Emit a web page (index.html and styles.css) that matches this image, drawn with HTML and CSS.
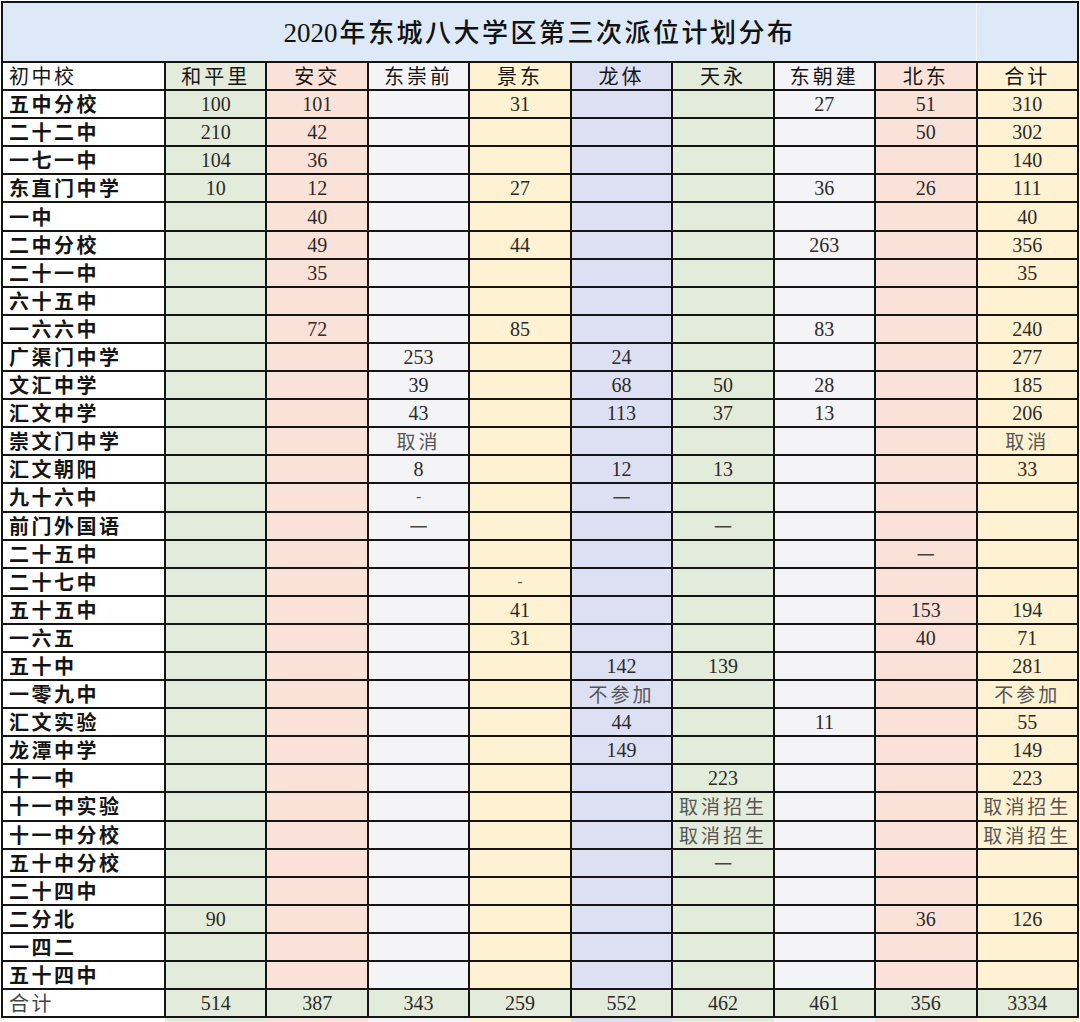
FILE: index.html
```html
<!DOCTYPE html>
<html lang="zh">
<head>
<meta charset="utf-8">
<link rel="stylesheet" href="styles.css">
</head>
<body>
<table class="plan">
  <colgroup>
    <col class="c-name">
    <col class="c-green">
    <col class="c-salmon">
    <col class="c-gray">
    <col class="c-yellow">
    <col class="c-lav">
    <col class="c-green">
    <col class="c-gray">
    <col class="c-salmon">
    <col class="c-yellow">
  </colgroup>
  <tr class="title-row">
    <td colspan="9" class="title"><span class="num">2020</span>年东城八大学区第三次派位计划分布</td>
    <td class="title-end"></td>
  </tr>
  <tr class="head">
    <td class="name">初中校</td><td>和平里</td><td>安交</td><td>东崇前</td><td>景东</td><td>龙体</td><td>天永</td><td>东朝建</td><td>北东</td><td>合计</td>
  </tr>
  <tr><td class="name">五中分校</td><td>100</td><td>101</td><td></td><td>31</td><td></td><td></td><td>27</td><td>51</td><td>310</td></tr>
  <tr><td class="name">二十二中</td><td>210</td><td>42</td><td></td><td></td><td></td><td></td><td></td><td>50</td><td>302</td></tr>
  <tr><td class="name">一七一中</td><td>104</td><td>36</td><td></td><td></td><td></td><td></td><td></td><td></td><td>140</td></tr>
  <tr><td class="name">东直门中学</td><td>10</td><td>12</td><td></td><td>27</td><td></td><td></td><td>36</td><td>26</td><td>111</td></tr>
  <tr><td class="name">一中</td><td></td><td>40</td><td></td><td></td><td></td><td></td><td></td><td></td><td>40</td></tr>
  <tr><td class="name">二中分校</td><td></td><td>49</td><td></td><td>44</td><td></td><td></td><td>263</td><td></td><td>356</td></tr>
  <tr><td class="name">二十一中</td><td></td><td>35</td><td></td><td></td><td></td><td></td><td></td><td></td><td>35</td></tr>
  <tr><td class="name">六十五中</td><td></td><td></td><td></td><td></td><td></td><td></td><td></td><td></td><td></td></tr>
  <tr><td class="name">一六六中</td><td></td><td>72</td><td></td><td>85</td><td></td><td></td><td>83</td><td></td><td>240</td></tr>
  <tr><td class="name">广渠门中学</td><td></td><td></td><td>253</td><td></td><td>24</td><td></td><td></td><td></td><td>277</td></tr>
  <tr><td class="name">文汇中学</td><td></td><td></td><td>39</td><td></td><td>68</td><td>50</td><td>28</td><td></td><td>185</td></tr>
  <tr><td class="name">汇文中学</td><td></td><td></td><td>43</td><td></td><td>113</td><td>37</td><td>13</td><td></td><td>206</td></tr>
  <tr><td class="name">崇文门中学</td><td></td><td></td><td class="cn">取消</td><td></td><td></td><td></td><td></td><td></td><td class="cn">取消</td></tr>
  <tr><td class="name">汇文朝阳</td><td></td><td></td><td>8</td><td></td><td>12</td><td>13</td><td></td><td></td><td>33</td></tr>
  <tr><td class="name">九十六中</td><td></td><td></td><td class="hy">-</td><td></td><td class="dash up">一</td><td></td><td></td><td></td><td></td></tr>
  <tr><td class="name">前门外国语</td><td></td><td></td><td class="dash">一</td><td></td><td></td><td class="dash">一</td><td></td><td></td><td></td></tr>
  <tr><td class="name">二十五中</td><td></td><td></td><td></td><td></td><td></td><td></td><td></td><td class="dash">一</td><td></td></tr>
  <tr><td class="name">二十七中</td><td></td><td></td><td></td><td class="hy">-</td><td></td><td></td><td></td><td></td><td></td></tr>
  <tr><td class="name">五十五中</td><td></td><td></td><td></td><td>41</td><td></td><td></td><td></td><td>153</td><td>194</td></tr>
  <tr><td class="name">一六五</td><td></td><td></td><td></td><td>31</td><td></td><td></td><td></td><td>40</td><td>71</td></tr>
  <tr><td class="name">五十中</td><td></td><td></td><td></td><td></td><td>142</td><td>139</td><td></td><td></td><td>281</td></tr>
  <tr><td class="name">一零九中</td><td></td><td></td><td></td><td></td><td class="cn">不参加</td><td></td><td></td><td></td><td class="cn">不参加</td></tr>
  <tr><td class="name">汇文实验</td><td></td><td></td><td></td><td></td><td>44</td><td></td><td>11</td><td></td><td>55</td></tr>
  <tr><td class="name">龙潭中学</td><td></td><td></td><td></td><td></td><td>149</td><td></td><td></td><td></td><td>149</td></tr>
  <tr><td class="name">十一中</td><td></td><td></td><td></td><td></td><td></td><td>223</td><td></td><td></td><td>223</td></tr>
  <tr><td class="name">十一中实验</td><td></td><td></td><td></td><td></td><td></td><td class="cn">取消招生</td><td></td><td></td><td class="cn">取消招生</td></tr>
  <tr><td class="name">十一中分校</td><td></td><td></td><td></td><td></td><td></td><td class="cn">取消招生</td><td></td><td></td><td class="cn">取消招生</td></tr>
  <tr><td class="name">五十中分校</td><td></td><td></td><td></td><td></td><td></td><td class="dash">一</td><td></td><td></td><td></td></tr>
  <tr><td class="name">二十四中</td><td></td><td></td><td></td><td></td><td></td><td></td><td></td><td></td><td></td></tr>
  <tr><td class="name">二分北</td><td>90</td><td></td><td></td><td></td><td></td><td></td><td></td><td>36</td><td>126</td></tr>
  <tr><td class="name">一四二</td><td></td><td></td><td></td><td></td><td></td><td></td><td></td><td></td><td></td></tr>
  <tr><td class="name">五十四中</td><td></td><td></td><td></td><td></td><td></td><td></td><td></td><td></td><td></td></tr>
  <tr class="total"><td class="name">合计</td><td>514</td><td>387</td><td>343</td><td>259</td><td>552</td><td>462</td><td>461</td><td>356</td><td>3334</td></tr>
  <tr class="tail"><td class="tail-name"></td><td></td><td></td><td></td><td></td><td></td><td></td><td></td><td></td><td></td></tr>
</table>
</body>
</html>
```

FILE: styles.css
```css
html, body {
  margin: 0;
  padding: 0;
  background: #ffffff;
}

.plan {
  margin: 1px 0 0 1px;
  width: 1078px;
  table-layout: fixed;
  border-collapse: collapse;
  font-family: "Liberation Serif", "Noto Serif", serif;
  font-size: 20px;
  color: #2a2a2a;
}

.c-name { width: 163px; background: #ffffff; }
.c-green { background: #e3ecda; }
.c-salmon { background: #fbe2d8; }
.c-gray { background: #f4f4f7; }
.c-yellow { background: #fef2d2; }
.c-lav { background: #dde0f3; }

.plan td {
  border: 2px solid #141414;
  height: 26.1px;
  padding: 0;
  text-align: center;
  vertical-align: middle;
  line-height: 26px;
  white-space: nowrap;
  overflow: hidden;
}

.plan td.name {
  text-align: left;
  padding-left: 6px;
  font-family: "Noto Sans CJK SC", sans-serif;
  font-weight: 700;
  font-size: 20px;
  letter-spacing: 2.5px;
  color: #151515;
  background: #ffffff;
}

.title-row td {
  height: 58px;
  background: #dde9f6;
}

.title {
  font-family: "Noto Sans CJK SC", sans-serif;
  font-size: 26px;
  font-weight: 500;
  letter-spacing: 2.5px;
  color: #121212;
  padding-left: 100px !important;
  border-right: 1px solid #f0f5fb !important;
}

.title .num {
  font-family: "Liberation Serif", serif;
  font-size: 27px;
  font-weight: 400;
  letter-spacing: 0;
  margin-right: 2px;
}

.title-end {
  border-left: 1px solid #f0f5fb !important;
}

.head td {
  font-family: "Noto Sans CJK SC", sans-serif;
  font-size: 20px;
  letter-spacing: 3px;
  color: #151515;
}

.head td.name {
  font-weight: 400;
}

.cn {
  font-family: "Noto Sans CJK SC", sans-serif;
  font-size: 19px;
  letter-spacing: 3px;
  color: #555555;
}

.dash {
  font-family: "Noto Sans CJK SC", sans-serif;
  font-size: 18px;
  color: #444444;
  line-height: 20px !important;
}

.dash.up {
  line-height: 16px !important;
}

.hy {
  font-size: 16px;
  color: #555555;
}

.total td {
  background: #e3ecda;
}

.total td.name {
  font-weight: 400;
  color: #444444;
  background: #ffffff;
}

.tail td {
  height: 4px;
  border: none;
  line-height: 4px;
}

.tail td.tail-name {
  background: #ffffff;
}
```
